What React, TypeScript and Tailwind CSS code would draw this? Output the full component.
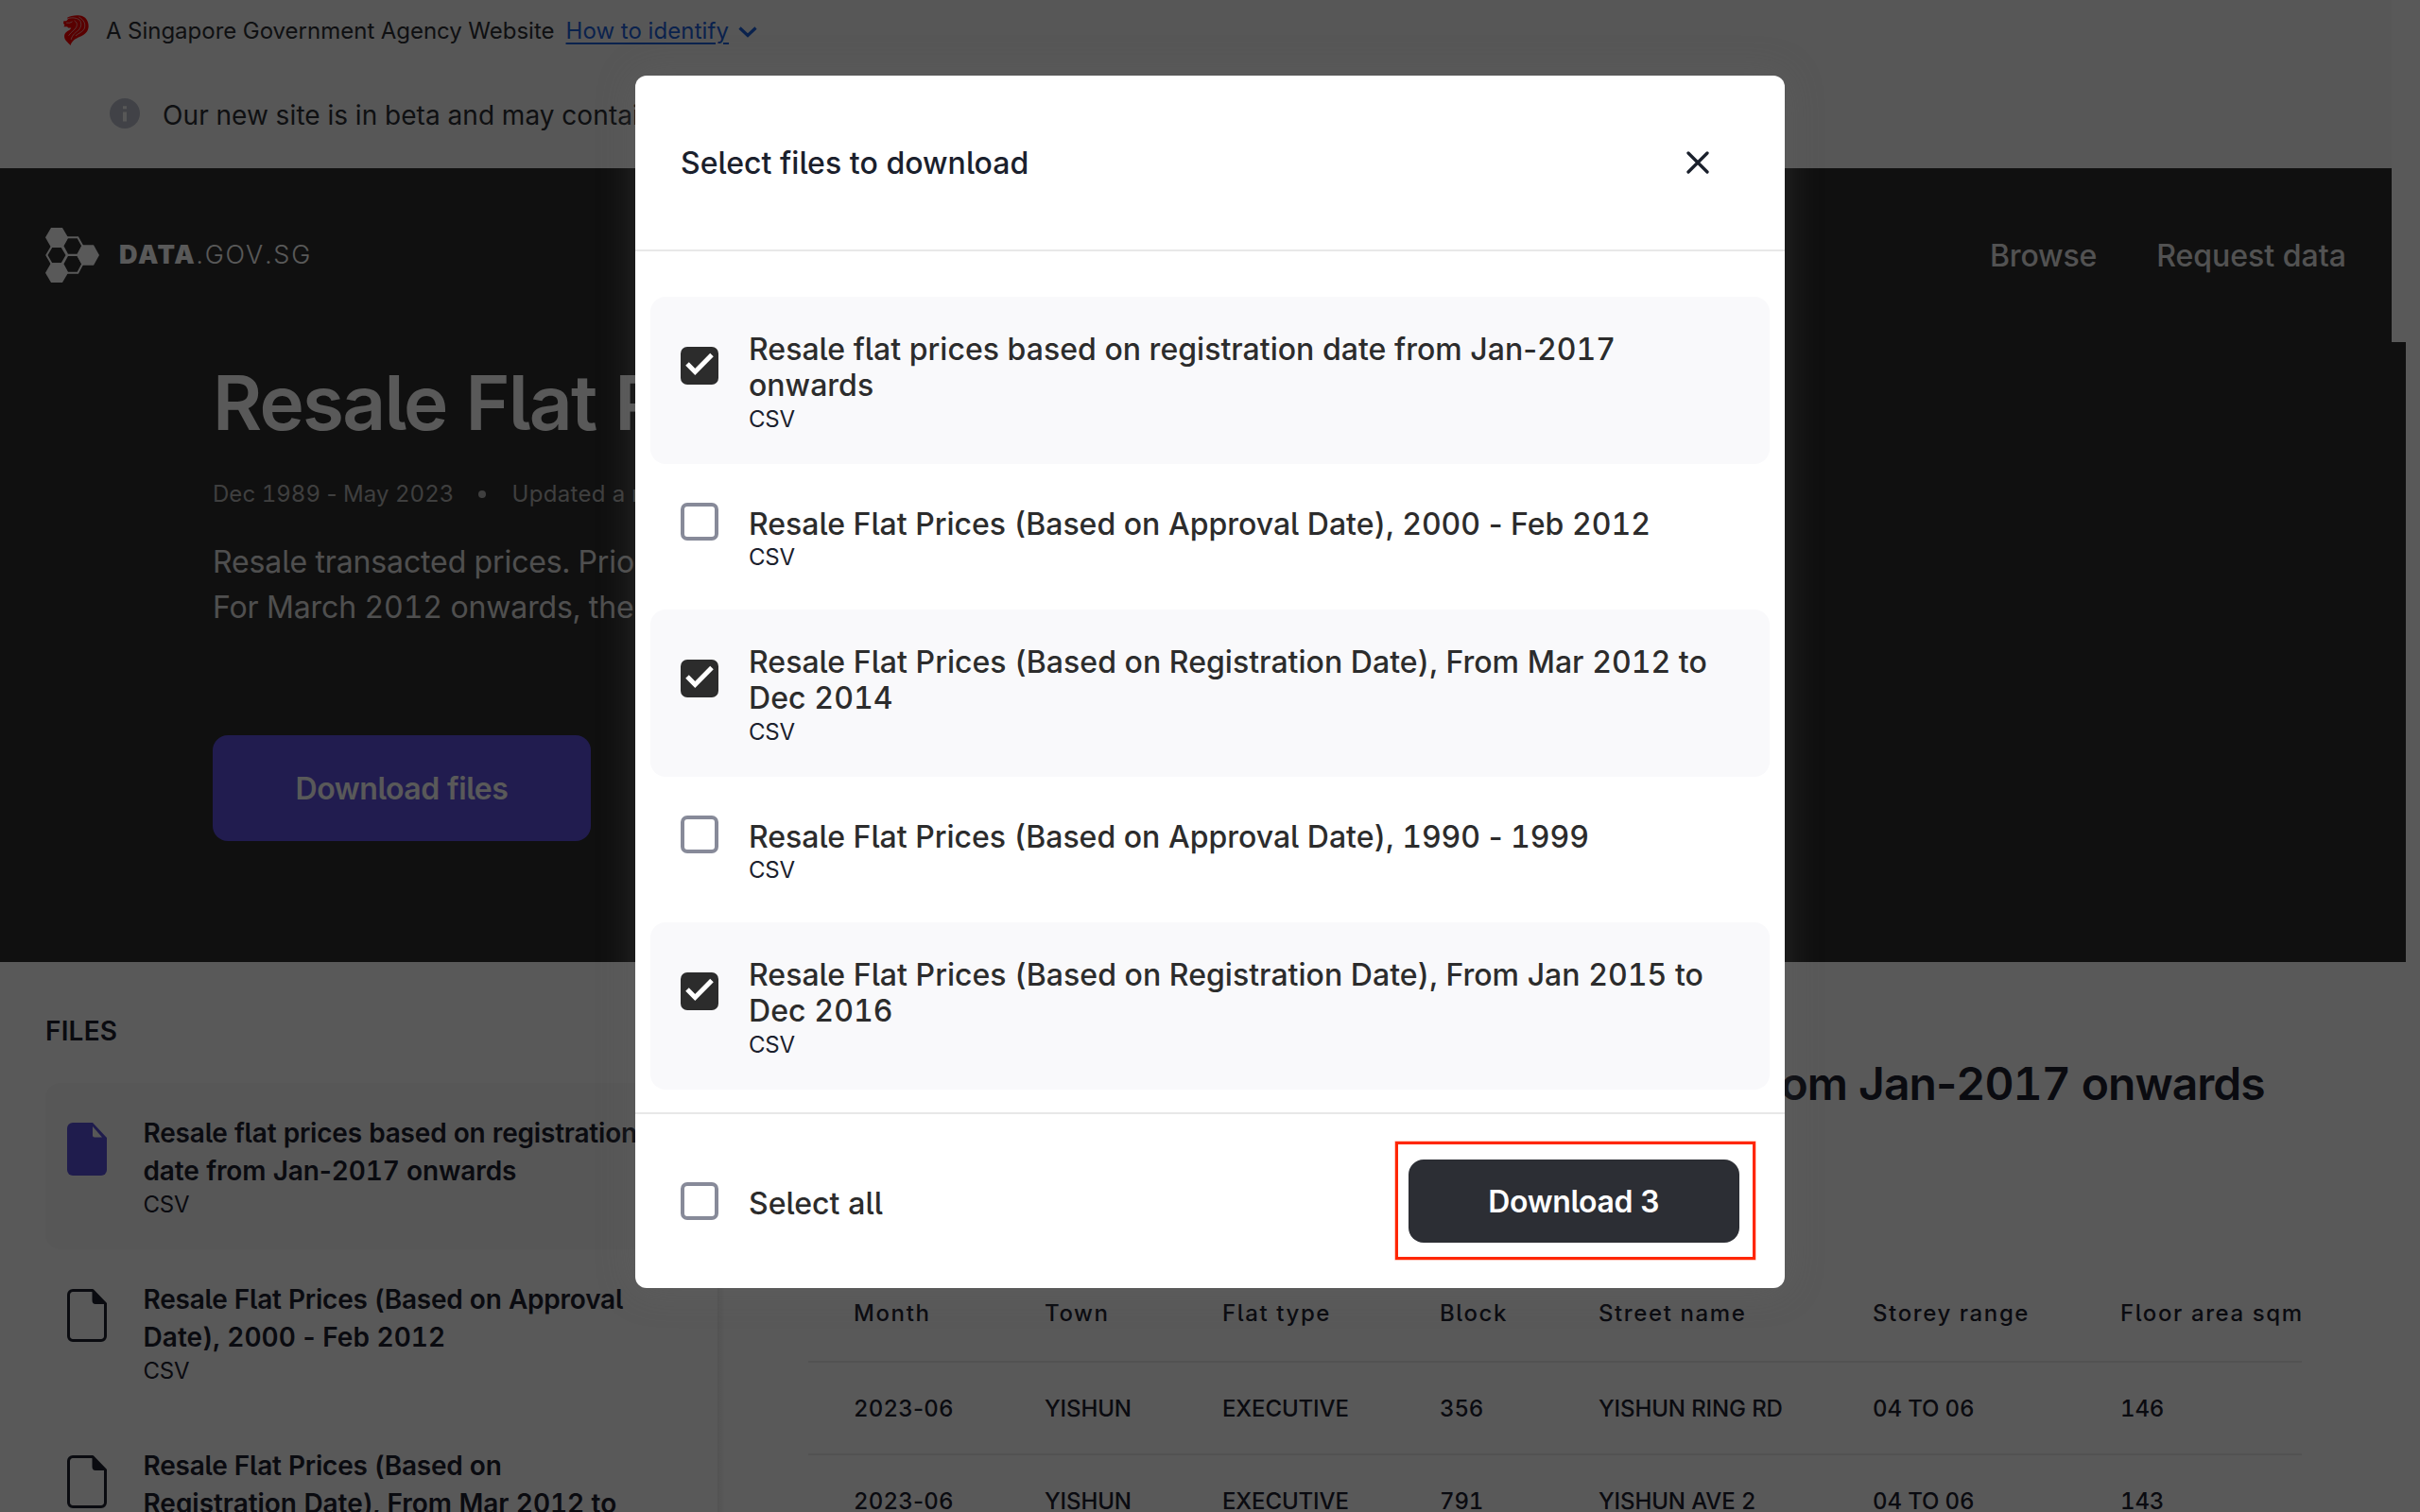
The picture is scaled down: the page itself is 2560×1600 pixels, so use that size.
type Line = { text: string; tracking: string };
type FileItem = { lines: Line[]; checked: boolean };

const dialogFiles: FileItem[] = [
  {
    lines: [
      { text: "Resale flat prices based on registration date from Jan-2017", tracking: "tracking-[0.02px]" },
      { text: "onwards", tracking: "tracking-[0.02px]" },
    ],
    checked: true,
  },
  {
    lines: [{ text: "Resale Flat Prices (Based on Approval Date), 2000 - Feb 2012", tracking: "tracking-[0px]" }],
    checked: false,
  },
  {
    lines: [
      { text: "Resale Flat Prices (Based on Registration Date), From Mar 2012 to", tracking: "tracking-[0.03px]" },
      { text: "Dec 2014", tracking: "tracking-[0.1px]" },
    ],
    checked: true,
  },
  {
    lines: [{ text: "Resale Flat Prices (Based on Approval Date), 1990 - 1999", tracking: "tracking-[0px]" }],
    checked: false,
  },
  {
    lines: [
      { text: "Resale Flat Prices (Based on Registration Date), From Jan 2015 to", tracking: "tracking-[0.03px]" },
      { text: "Dec 2016", tracking: "tracking-[0.1px]" },
    ],
    checked: true,
  },
];

const sidebarFiles: { lines: Line[]; active: boolean }[] = [
  {
    lines: [
      { text: "Resale flat prices based on registration", tracking: "tracking-[-0.2px]" },
      { text: "date from Jan-2017 onwards", tracking: "tracking-[-0.12px]" },
    ],
    active: true,
  },
  {
    lines: [
      { text: "Resale Flat Prices (Based on Approval", tracking: "tracking-[-0.22px]" },
      { text: "Date), 2000 - Feb 2012", tracking: "tracking-[0.05px]" },
    ],
    active: false,
  },
  {
    lines: [
      { text: "Resale Flat Prices (Based on", tracking: "tracking-[-0.22px]" },
      { text: "Registration Date), From Mar 2012 to", tracking: "tracking-[-0.04px]" },
    ],
    active: false,
  },
];

const columns = ["Month", "Town", "Flat type", "Block", "Street name", "Storey range", "Floor area sqm"];
const rows = [
  ["2023-06", "YISHUN", "EXECUTIVE", "356", "YISHUN RING RD", "04 TO 06", "146"],
  ["2023-06", "YISHUN", "EXECUTIVE", "791", "YISHUN AVE 2", "04 TO 06", "143"],
];

// Digits are tabular, hyphens keep their proportional width.
function Txt({ children }: { children: string }) {
  const parts = children.split("-");
  return (
    <>
      {parts.map((part, i) => (
        <span key={i}>
          {i > 0 && <span className="[font-feature-settings:'cv05']">-</span>}
          {part}
        </span>
      ))}
    </>
  );
}

function Lion() {
  return (
    <svg className="h-[32px] w-[27px]" viewBox="0 0 79 94">
      <path
        fill="#ff0000"
        d="M12 8 C22 1 48 -2 60 4 C72 9 79 22 78 37 C77 52 66 61 52 67 C37 73 27 80 22 94 C14 84 3 78 3 66 C3 55 12 50 19 46 C22 44 24 42 24 40 L15 40 L12 36 L1 36 L4 31 L0 26 L1 18 L9 18 L14 13 Z"
      />
      <g fill="none" stroke="#f9f9f9" strokeWidth="1.8">
        <path d="M13 11 C28 6 42 9 50 15 C58 24 56 38 46 48 C38 54 28 60 24 76" />
        <path d="M34 17 C42 22 44 28 40 38 C36 46 24 52 16 64" />
        <path d="M48 6 C64 14 70 28 65 42 C60 52 48 56 38 64" />
        <path d="M9 24 L20 24 L28 20" />
      </g>
    </svg>
  );
}

function Logo() {
  return (
    <svg className="h-[58px] w-[57px]" viewBox="0 0 171 174">
      <g fill="#ffffff">
        <path d="M18 0 H54 L72 31 L54 62 H18 L0 31 Z" />
        <path d="M18 112 H54 L72 143 L54 174 H18 L0 143 Z" />
        <path d="M117 55 H153 L171 87 L153 119 H117 L99 87 Z" />
      </g>
      <g fill="none" stroke="#ffffff" strokeWidth="6">
        <path d="M20 60 H52 L68 87 L52 115 H20 L4 87 Z" />
        <path d="M70 31 H103 L118 58 L103 86 H70 L55 58 Z" />
        <path d="M70 87 H103 L118 115 L103 143 H70 L55 115 Z" />
      </g>
    </svg>
  );
}

function FileIcon({ active }: { active: boolean }) {
  return (
    <svg className="mt-[42px] h-[56px] w-[42px] shrink-0" viewBox="0 0 42 56">
      {active ? (
        <>
          <path fill="#5b50dc" d="M6 0 H27 L42 16 V50 A6 6 0 0 1 36 56 H6 A6 6 0 0 1 0 50 V6 A6 6 0 0 1 6 0 Z" />
          <path fill="#f9f9f9" d="M27 4 L37 15.500 H29 Q27 15.500 27 13.500 Z" />
        </>
      ) : (
        <>
          <path
            fill="none"
            stroke="#1e2230"
            strokeWidth="3"
            strokeLinejoin="round"
            d="M6 1.500 H27 L40.500 15.500 V50 A4.500 4.500 0 0 1 36 54.500 H6 A4.500 4.500 0 0 1 1.500 50 V6 A4.500 4.500 0 0 1 6 1.500 Z"
          />
          <path fill="#1e2230" d="M26.500 1 L41.500 16 H30 Q26.500 16 26.500 12 Z" />
        </>
      )}
    </svg>
  );
}

function Checkbox({ checked }: { checked: boolean }) {
  if (!checked) {
    return <div className="size-10 shrink-0 rounded-[7px] border-4 border-[#878a99] bg-white" />;
  }
  return (
    <div className="size-10 shrink-0 rounded-[7px] bg-[#2c2c2c]">
      <svg className="size-10" viewBox="0 0 40 40">
        <path fill="none" stroke="#ffffff" strokeWidth="5" d="M7 18 L15.300 26.500 L33 8.500" />
      </svg>
    </div>
  );
}

function DialogRow({ item }: { item: FileItem }) {
  return (
    <div
      className={
        item.checked
          ? "flex h-[177px] items-start gap-8 rounded-2xl bg-[#f9f9fb] pl-8"
          : "flex h-[154px] items-start gap-8 rounded-2xl pl-8"
      }
    >
      <div className={item.checked ? "pt-[52.500px]" : "pt-[41px]"}>
        <Checkbox checked={item.checked} />
      </div>
      <div className={item.checked ? "pt-[37px]" : "pt-[45px]"}>
        <div className="text-[32px] leading-[38.4px] font-medium text-[#2c2c2c]">
          {item.lines.map((line) => (
            <div key={line.text} className={`whitespace-nowrap ${line.tracking}`}>
              <Txt>{line.text}</Txt>
            </div>
          ))}
        </div>
        <div className="text-2xl leading-8 tracking-[-0.2px] text-[#1a202c]">CSV</div>
      </div>
    </div>
  );
}

function TopBanner() {
  return (
    <div className="h-[178px] w-[2530px] bg-[#f9f9f9]">
      <div className="flex h-16 items-center pl-[67px] text-2xl leading-8 text-[#2c2e34]">
        <Lion />
        <span className="mt-0.5 ml-[18px]">A Singapore Government Agency Website</span>
        <span className="mt-0.5 ml-3 tracking-[0.1px] text-[#1f62dc] underline decoration-2 underline-offset-[4px]">
          How to identify
        </span>
        <svg className="mt-1 ml-2.5 h-3 w-5" viewBox="0 0 20 12">
          <path fill="none" stroke="#1f62dc" strokeWidth="3.2" d="M1.500 1.500 L10 9.500 L18.500 1.500" />
        </svg>
      </div>
      <div className="flex h-[114px] items-center pl-[116px]">
        <svg className="mb-0.5 size-8" viewBox="0 0 32 32">
          <circle cx="16" cy="16" r="16" fill="#babecb" />
          <path fill="#f9f9f9" d="M14 8.200 h4 v3 h-4 Z M14 14.500 h4 v10 h-4 Z" />
        </svg>
        <span className="mt-0.5 ml-6 text-[28px] leading-10 tracking-[0.1px] whitespace-nowrap text-[#2c2e34]">
          Our new site is in beta and may contain bugs.
        </span>
      </div>
    </div>
  );
}

function SiteHeader() {
  return (
    <header className="flex h-[184px] w-[2530px] items-center bg-[#2e2e2e] pr-12 pl-12 text-white">
      <Logo />
      <div className="mb-px ml-[21px] flex text-[27px] leading-8">
        <span className="font-black tracking-[1.7px]">DATA</span>
        <span className="font-light tracking-[1.9px]">.GOV.SG</span>
      </div>
      <nav className="mt-0.5 ml-auto flex gap-[63px] text-[32px] leading-10 font-medium text-[#ececec]">
        <span className="tracking-[-0.15px]">Browse</span>
        <span>Request data</span>
      </nav>
    </header>
  );
}

function Hero() {
  return (
    <section className="flex h-[656px] w-[2545px] flex-col items-start bg-[#2e2e2e] pt-4 pl-[225px]">
      <h1 className="text-[80px] leading-[96px] font-semibold tracking-[-1.73px] text-white">Resale Flat Prices</h1>
      <div className="mt-[33px] flex h-8 items-center text-2xl text-[#b4b4b4]">
        <span className="tracking-[0.04px]">
          <Txt>Dec 1989 - May 2023</Txt>
        </span>
        <span className="ml-[26px] size-2 rounded-full bg-[#b4b4b4]" />
        <span className="ml-[27px] tracking-[0.35px]">Updated a month ago</span>
      </div>
      <div className="mt-8 text-[32px] leading-[48px] tracking-[-0.12px] text-[#e3e3e3]">
        <p>Resale transacted prices. Prior to March 2012, data is based on date of approval.</p>
        <p>For March 2012 onwards, the data is based on date of registration.</p>
      </div>
      <button className="mt-[111px] h-28 w-[400px] rounded-2xl bg-[#5e50e2] pt-0.5 text-[32px] font-semibold tracking-[-0.4px] text-white">
        Download files
      </button>
    </section>
  );
}

function Sidebar() {
  return (
    <aside className="w-[759px] shrink-0 bg-white pt-[53px] pl-12">
      <h2 className="text-[28px] leading-10 font-semibold tracking-[0.2px] text-[#1e2230]">FILES</h2>
      <div className="mt-[35px] flex w-[664px] flex-col">
        {sidebarFiles.map((f) => (
          <div
            key={f.lines[1].text}
            className={f.active ? "flex h-44 rounded-2xl bg-[#f9f9f9] pl-[23px]" : "flex h-44 rounded-2xl pl-[23px]"}
          >
            <FileIcon active={f.active} />
            <div className="ml-[38.500px] pt-[33px] text-[#1e2230]">
              <div className="text-[28px] leading-10 font-semibold whitespace-nowrap">
                {f.lines.map((line) => (
                  <div key={line.text} className={line.tracking}>
                    <Txt>{line.text}</Txt>
                  </div>
                ))}
              </div>
              <div className="text-2xl leading-8 tracking-[-0.2px]">CSV</div>
            </div>
          </div>
        ))}
      </div>
    </aside>
  );
}

const gridClass = "grid grid-cols-[202px_188px_230px_168px_290px_262px_192px] items-center pt-0.5 pl-12 whitespace-nowrap";

function DataPanel() {
  return (
    <main className="flex grow bg-white">
      <div className="w-[7px] bg-linear-to-r from-[#ededed] to-[#fcfcfc]" />
      <div className="ml-[89px] w-[1580px] pt-[101px] text-[#1e2230]">
        <h2 className="text-5xl leading-[56px] font-semibold tracking-[-0.95px] whitespace-nowrap">
          <Txt>Resale flat prices based on registration date from Jan-2017 onwards</Txt>
        </h2>
        <div className="mt-[163px] w-[1580px] text-2xl font-medium">
          <div className={`${gridClass} h-[104px] border-b-2 border-[#ebebeb] tracking-[1.6px]`}>
            {columns.map((c) => (
              <span key={c}>{c}</span>
            ))}
          </div>
          {rows.map((r) => (
            <div key={r[3]} className={`${gridClass} h-[98px] border-b-2 border-[#ebebeb] tracking-[-0.12px]`}>
              {r.map((cell, i) => (
                <span key={i} className={i === 0 ? "tracking-[0.2px]" : ""}>
                  <Txt>{cell}</Txt>
                </span>
              ))}
            </div>
          ))}
        </div>
      </div>
    </main>
  );
}

function DownloadDialog() {
  return (
    <div
      role="dialog"
      className="flex h-[1283px] w-[1216px] flex-col rounded-xl bg-white shadow-[0_0_40px_rgba(104,104,104,0.3)]"
    >
      <div className="flex h-[186px] items-center justify-between border-b-2 border-[#e8e8e8] pr-20 pl-12">
        <h3 className="mt-0.5 text-[32px] leading-10 font-medium tracking-[0.03px] text-[#1a202c]">
          Select files to download
        </h3>
        <svg className="size-6" viewBox="0 0 24 24">
          <path fill="none" stroke="#1a202c" strokeWidth="3.300" strokeLinecap="round" d="M2 2 L22 22 M22 2 L2 22" />
        </svg>
      </div>
      <div className="flex grow flex-col px-4 pt-12">
        {dialogFiles.map((item) => (
          <DialogRow key={item.lines[0].text} item={item} />
        ))}
      </div>
      <div className="flex h-[186px] items-center border-t-2 border-[#e8e8e8] px-12">
        <Checkbox checked={false} />
        <span className="mt-1.5 ml-8 text-[32px] leading-10 font-medium tracking-[0.05px] text-[#2c2c2c]">
          Select all
        </span>
        <div className="relative ml-auto">
          <button className="block h-[88px] w-[350px] rounded-2xl bg-[#2c2e34] pt-0.5 text-[32px] font-semibold tracking-[-0.35px] text-white">
            Download 3
          </button>
          <div className="pointer-events-none absolute -top-[19px] -right-[17px] -bottom-[18px] -left-[14px] border-3 border-[#ff2600] shadow-[0_0_0_0.500px_rgba(255,38,0,0.5)]" />
        </div>
      </div>
    </div>
  );
}

export default function App() {
  return (
    <div className="relative h-[1600px] w-[2560px] overflow-hidden bg-white font-[Inter,sans-serif] [font-feature-settings:'tnum','cv05']">
      <TopBanner />
      <SiteHeader />
      <Hero />
      <div className="flex h-[582px] overflow-hidden">
        <Sidebar />
        <DataPanel />
      </div>
      <div className="absolute inset-0 flex items-start justify-center bg-black/65 pt-20">
        <DownloadDialog />
      </div>
    </div>
  );
}
